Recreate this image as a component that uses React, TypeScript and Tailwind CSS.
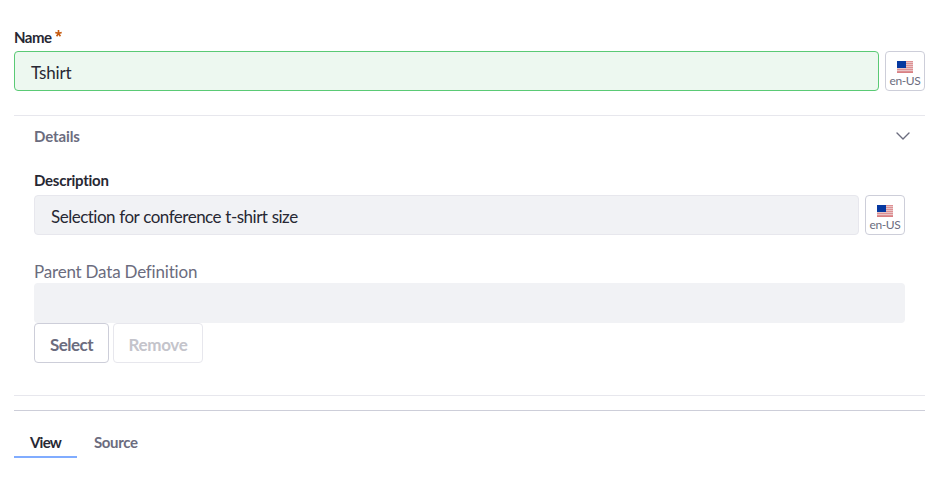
function Flag() {
  return (
    <svg width="16" height="12" viewBox="0 0 16 12" shapeRendering="crispEdges">
      <rect width="16" height="12" fill="#e9c4c6" />
      {[0, 2, 4, 6, 8, 10].map((y) => (
        <rect key={y} y={y} width="16" height="1" fill="#dd9093" />
      ))}
      <rect y="11" width="16" height="1" fill="#d98083" />
      <rect width="9" height="7" fill="#0638a0" />
    </svg>
  );
}

function LocaleButton() {
  return (
    <button className="flex h-10 w-10 shrink-0 flex-col items-center rounded border border-[#cdced9] bg-white pt-[9px] text-[#6b6c7e]">
      <Flag />
      <span className="mt-[1px] whitespace-nowrap text-[12px] leading-[14px] tracking-[-0.4px]">en-US</span>
    </button>
  );
}

export default function App() {
  return (
    <main className="h-[484px] w-[940px] bg-white pl-[14px] pr-[15px] pt-[26px] font-['Lato',sans-serif] text-[#272833]">
      <label className="flex h-[25px] text-[15px] font-bold leading-[22px]">
        <span className="tracking-[-0.5px]">Name</span>
        <svg className="ml-[3px] mt-[4px]" width="7" height="7" viewBox="0 0 7 7" fill="none" stroke="#c65b10" strokeWidth="1.6">
          <path d="M3.5 0v3.5M.3 2.5l3.2 1 3.2-1M1.6 6.3l1.9-2.8 1.9 2.8" />
        </svg>
      </label>
      <div className="flex gap-[6px]">
        <div className="h-10 flex-1 rounded border border-[#5aca75] bg-[#edf8f0] pl-4 text-[17px] leading-[41px]">
          <span className="tracking-[-0.15px]">Tshirt</span>
        </div>
        <LocaleButton />
      </div>

      <section className="mt-6 h-[281px] border-y border-[#e7e7ed] px-5">
        <header className="flex h-[55px] justify-between text-[15px] font-bold text-[#6b6c7e]">
          <span className="leading-[41px] tracking-[-0.1px]">Details</span>
          <svg className="mr-[-5px] mt-[16px]" width="14" height="9" viewBox="0 0 14 9" fill="none" stroke="#6b6c7e" strokeWidth="1.4" strokeLinecap="round" strokeLinejoin="round">
            <path d="M1 1l6 6 6-6" />
          </svg>
        </header>
        <label className="block h-6 text-[15px] font-bold leading-[19px] tracking-[-0.25px]">Description</label>
        <div className="flex gap-[6px]">
          <div className="h-10 flex-1 rounded border border-[#e7e7ed] bg-[#f1f2f5] pl-4 text-[17px] leading-[41px] tracking-[-0.5px] [word-spacing:0.4px]">
            <span>Selection for conference t-shirt size</span>
          </div>
          <LocaleButton />
        </div>
        <div className="mt-6 h-6 text-[17px] leading-[25px] tracking-[-0.2px] text-[#6b6c7e]">
          <span>Parent Data Definition</span>
        </div>
        <div className="h-10 rounded bg-[#f1f2f5]" />
        <div className="flex gap-1 text-[17px] font-bold leading-[41px]">
          <button className="h-10 w-[75px] rounded border border-[#cdced9] tracking-[-0.5px] text-[#6b6c7e]"><span>Select</span></button>
          <button className="h-10 w-[90px] rounded border border-[#e7e7ed] tracking-[-0.35px] text-[#c4c4cb]"><span>Remove</span></button>
        </div>
      </section>

      <nav className="mt-[14px] flex border-t border-[#cdced9] pt-4 text-[15px] font-bold leading-[31px]">
        <span className="h-[31px] w-[63px] border-b-2 border-[#80acff] pl-4 tracking-[-0.8px]">View</span>
        <span className="pl-[17px] tracking-[-0.35px] text-[#6b6c7e]">Source</span>
      </nav>
    </main>
  );
}
